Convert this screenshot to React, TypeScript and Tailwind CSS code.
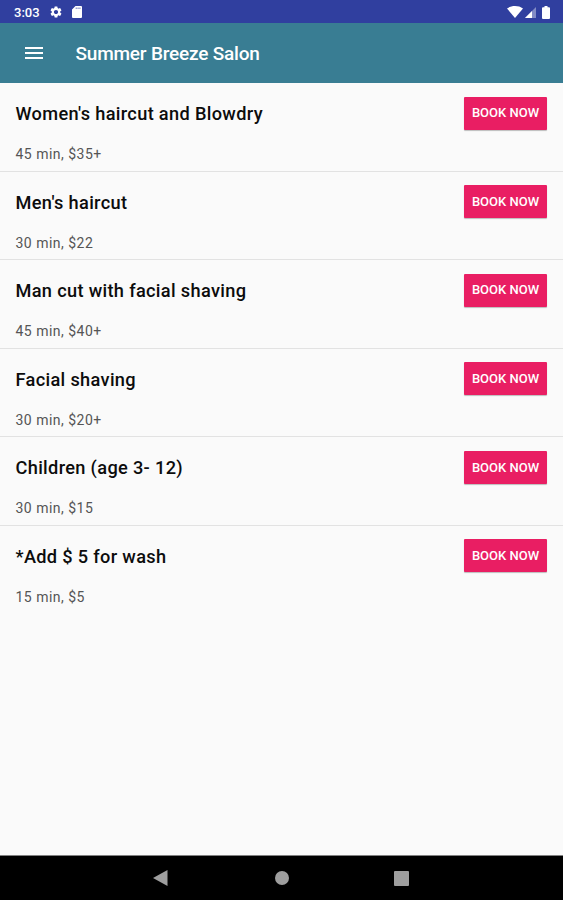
import { MdSettings } from 'react-icons/md'

const services = [
  { name: "Women's haircut and Blowdry", details: '45 min, $35+' },
  { name: "Men's haircut", details: '30 min, $22' },
  { name: 'Man cut with facial shaving', details: '45 min, $40+' },
  { name: 'Facial shaving', details: '30 min, $20+' },
  { name: 'Children (age 3- 12)', details: '30 min, $15' },
  { name: '*Add $ 5 for wash', details: '15 min, $5' },
]

function StatusBar() {
  return (
    <div className="flex h-[23px] shrink-0 items-center bg-[#303f9f] pt-px pr-[13px] pl-[14px] text-white">
      <span className="w-[36px] text-[13px] leading-none font-medium">3:03</span>
      <MdSettings size={14} className="-ml-px" />
      <svg width="10" height="12" viewBox="0 0 10 12" className="ml-[9px]" fill="currentColor">
        <path fillRule="evenodd" d="M3.5 0H9a1 1 0 0 1 1 1v10a1 1 0 0 1-1 1H1a1 1 0 0 1-1-1V3.5zM3.8 1.5v1.5h.7V1.5zm1.9 0v1.5h.7V1.5zm1.9 0v1.5h.7V1.5z" />
      </svg>
      <div className="ml-auto flex items-center">
        <svg width="16" height="12" viewBox="0 0 16 12" fill="currentColor">
          <path d="M0 2.5C4.5-.8 11.5-.8 16 2.5L8 12z" />
        </svg>
        <svg width="11" height="11" viewBox="0 0 11 11" className="ml-0.5" fill="currentColor">
          <path d="M11 0v11H0z" opacity=".4" />
          <path d="M7 4v7H0z" />
        </svg>
        <svg width="8" height="13" viewBox="0 0 8 13" className="ml-1.5" fill="currentColor">
          <path d="M2.5 0h3v1.3H7a1 1 0 0 1 1 1V12a1 1 0 0 1-1 1H1a1 1 0 0 1-1-1V2.3a1 1 0 0 1 1-1h1.5z" />
        </svg>
      </div>
    </div>
  )
}

export default function App() {
  return (
    <div className="flex h-[900px] w-[563px] flex-col overflow-hidden bg-[#fafafa] font-[Roboto,sans-serif]">
      <StatusBar />

      <header className="flex h-[60px] shrink-0 items-center bg-[#397d93] pl-[25px] text-white">
        <button aria-label="Menu" className="flex flex-col gap-[3px]">
          <span className="h-[2px] w-[18px] bg-white" />
          <span className="h-[2px] w-[18px] bg-white" />
          <span className="h-[2px] w-[18px] bg-white" />
        </button>
        <h1 className="ml-[32.5px] pt-[3px] text-[19px] font-medium tracking-[-0.2px]">Summer Breeze Salon</h1>
      </header>

      <main className="flex-1">
        {services.map((service) => (
          <div
            key={service.name}
            className="flex h-[88.6px] items-start justify-between border-b border-[#e2e2e2] pr-4 pl-[15.5px] last:border-b-0"
          >
            <div>
              <h2 className="mt-[19px] text-[18.2px] leading-6 font-medium tracking-[0.33px] text-[#0c0c0c]">
                {service.name}
              </h2>
              <p className="mt-[18px] text-[14px] leading-5 tracking-[0.48px] text-[#555]">
                {service.details}
              </p>
            </div>
            <button className="mt-[13.500px] h-[33px] w-[83px] rounded-[1px] bg-[#e91e63] text-[13px] font-medium text-white shadow-[0_1px_1px_rgba(0,0,0,0.25)]">
              BOOK NOW
            </button>
          </div>
        ))}
      </main>

      {/* Android navigation bar */}
      <nav className="flex h-[45px] shrink-0 items-center border-t border-[#808080] bg-black pl-[153px] text-[#9e9e9e]">
        <svg width="15" height="16" viewBox="0 0 15 16" fill="currentColor">
          <path d="M0 8 14.5 0v16z" />
        </svg>
        <span className="ml-[107px] size-[14px] rounded-full bg-[#9e9e9e]" />
        <span className="ml-[105px] size-[15px] rounded-[1px] bg-[#9e9e9e]" />
      </nav>
    </div>
  )
}
